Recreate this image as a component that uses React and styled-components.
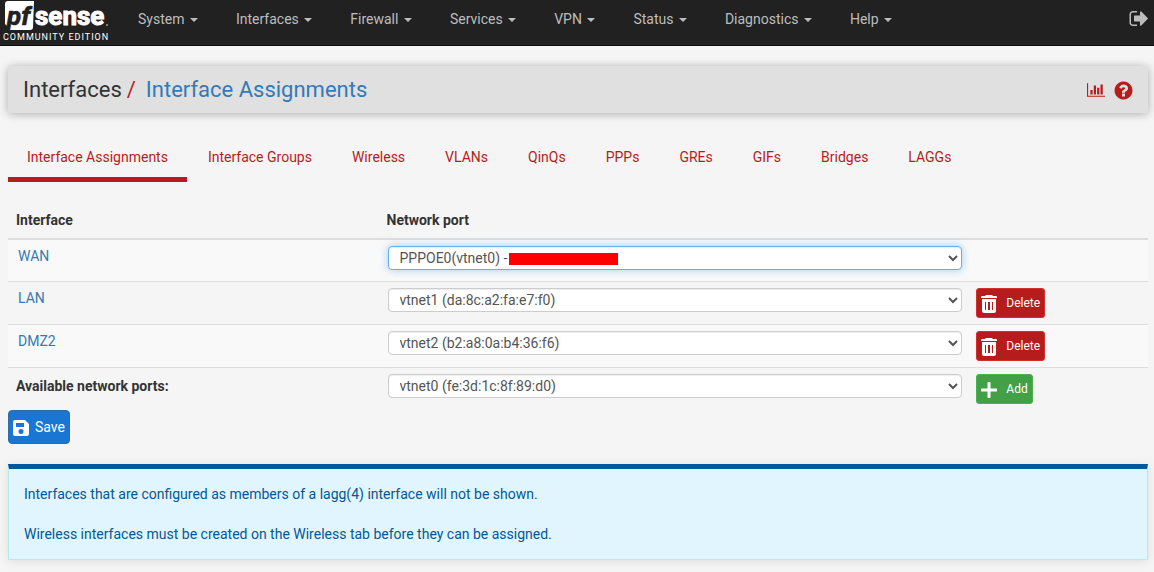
import React from "react";
import styled, { createGlobalStyle } from "styled-components";

const GlobalStyle = createGlobalStyle`
  *, *::before, *::after { box-sizing: border-box; }
  body {
    margin: 0;
    background: #f5f5f5;
    color: #333;
    font: 14px/20px Roboto, "Liberation Sans", sans-serif;
  }
  a { color: #337ab7; text-decoration: none; }
`;

const Navbar = styled.nav`
  display: flex;
  align-items: flex-start;
  height: 46px;
  background: #212121;
  border-bottom: 1px solid #080808;
`;

const Brand = styled.a`
  width: 123px;
  flex: none;
  svg { display: block; }
`;

const Menu = styled.ul`
  display: flex;
  flex: 1;
  margin: 0;
  padding: 0;
  list-style: none;
`;

const MenuLink = styled.a`
  display: block;
  padding: 9px 23px 10px 15px;
  color: #bdbdbd;
  white-space: nowrap;
`;

const Caret = styled.span`
  display: inline-block;
  margin-left: 2px;
  vertical-align: middle;
  border: 4px solid transparent;
  border-top-color: currentColor;
  border-bottom: 0;
`;

const Logout = styled.a`
  padding: 8px 3px 0 0;
  color: #bdbdbd;
  svg { display: block; }
`;

const Page = styled.main`
  padding: 20px 6px 12px 8px;
`;

const Header = styled.header`
  display: flex;
  align-items: center;
  justify-content: space-between;
  min-height: 47px;
  padding: 0 14px 0 15px;
  background: #e0e0e0;
  border-radius: 2px;
  box-shadow: 0 1px 10px rgba(0, 0, 0, 0.3);
`;

const Breadcrumb = styled.h1`
  display: flex;
  gap: 5px;
  margin: 0;
  font-size: 22px;
  line-height: 24px;
  font-weight: 400;
  a { margin-left: 5px; }
`;

const Slash = styled.span`
  color: #b71c1c;
`;

const HeaderIcons = styled.div`
  display: flex;
  align-items: center;
  gap: 8px;
  padding-top: 1px;
  a { color: #b71c1c; }
  svg { display: block; }
`;

const Tabs = styled.ul`
  display: flex;
  gap: 2px;
  margin: 24px 0 18px;
  padding: 0;
  list-style: none;
`;

const Tab = styled.a`
  display: block;
  padding: 10px 19px;
  color: #b71c1c;
  white-space: nowrap;
  border-bottom: 5px solid ${(p) => (p.$active ? "#b71c1c" : "transparent")};
`;

const Table = styled.table`
  width: 100%;
  border-collapse: collapse;
  table-layout: fixed;
  th, td { text-align: left; vertical-align: top; }
  th { padding: 10px 8px 8px; font-weight: 700; }
`;

const Column = styled.col`
  width: ${(p) => p.$width};
`;

const HeadRow = styled.tr`
  border-bottom: 2px solid #ddd;
`;

const Row = styled.tr`
  background: ${(p) => (p.$shaded ? "#f9f9f9" : "transparent")};
  &:not(:last-child) { border-bottom: 1px solid #ddd; }
  td { height: 42px; padding: 6px 10px; }
  th { padding: 8px 8px 0; }
`;

const PortCell = styled.td`
  && { padding: 6px 9px; }
`;

const ActionCell = styled.td`
  && { padding-left: 5px; }
`;

const PortPicker = styled.div`
  position: relative;
`;

const Select = styled.select`
  display: block;
  width: 100%;
  height: 24px;
  padding: 0 6px 0 7px;
  color: #555;
  font: inherit;
  background: #fff;
  border: 1px solid ${(p) => (p.$focused ? "#66afe9" : "#ccc")};
  border-radius: 4px;
  box-shadow: ${(p) =>
    p.$focused
      ? "inset 0 1px 1px rgba(0,0,0,.075), 0 0 8px rgba(102,175,233,.6)"
      : "inset 0 1px 1px rgba(0,0,0,.075)"};
`;

const Redaction = styled.span`
  position: absolute;
  left: 121px;
  top: 7px;
  width: 109px;
  height: 12px;
  background: #f00;
`;

const Button = styled.button`
  display: flex;
  align-items: center;
  gap: ${(p) => (p.$large ? "6px" : "9px")};
  height: ${(p) => (p.$large ? "34px" : "30px")};
  padding: 0 4px;
  color: #fff;
  font: ${(p) => (p.$large ? "14px/20px" : "12px/18px")} Roboto, sans-serif;
  background: ${(p) => p.$color};
  border: 1px solid ${(p) => p.$edge};
  border-radius: ${(p) => (p.$large ? "4px" : "3px")};
  svg { display: block; margin-top: 3px; }
`;

const Notice = styled.section`
  margin-top: 20px;
  padding: 15px;
  color: #01579b;
  background: #e1f5fe;
  border: 1px solid #b2ebf2;
  border-top: 5px solid #01579b;
  box-shadow: 0 1px 10px rgba(0, 0, 0, 0.1);
  p { margin: 0; }
  p + p { margin-top: 20px; }
`;

const Logo = () => (
  <svg width="112" height="44" viewBox="0 0 112 44" role="img" aria-label="pfSense Community Edition">
    <path d="M8 1h26l-1 26q0 3-3 3H8l-1-4-2-2V4q0-3 3-3z" fill="#fff" />
    <text x="7" y="25" fontFamily="Roboto" fontSize="26" fontWeight="700" fontStyle="italic" fill="#212121" stroke="#212121" strokeWidth="0.6">pf</text>
    <text x="35" y="25" fontFamily="Roboto" fontSize="26" fontWeight="700" fill="#fff" stroke="#fff" strokeWidth="1">sense</text>
    <circle cx="107" cy="25" r="1" fill="#999" />
    <text x="3" y="40" fontFamily="Roboto" fontSize="9" letterSpacing="1" fill="#fff">COMMUNITY EDITION</text>
  </svg>
);

const LogoutIcon = () => (
  <svg width="22" height="21" viewBox="0 0 1792 1792" fill="currentColor" aria-hidden="true">
    <path d="M640 1440q0 4 1 20t.5 26.5-3 23.5-10 19.5-20.5 6.5h-320q-119 0-203.5-84.5t-84.5-203.5v-704q0-119 84.5-203.5t203.5-84.5h320q13 0 22.5 9.5t9.5 22.5q0 4 1 20t.5 26.5-3 23.5-10 19.5-20.5 6.5h-320q-66 0-113 47t-47 113v704q0 66 47 113t113 47h312l11.5 1 11.5 3 8 5.5 7 9 2 13.5zm928-544q0 26-19 45l-544 544q-19 19-45 19t-45-19-19-45v-288h-448q-26 0-45-19t-19-45v-384q0-26 19-45t45-19h448v-288q0-26 19-45t45-19 45 19l544 544q19 19 19 45z" />
  </svg>
);

const ChartIcon = () => (
  <svg width="18" height="16" viewBox="0 0 2048 1792" fill="currentColor" aria-hidden="true">
    <path d="M640 896v512h-256v-512h256zm384-512v1024h-256v-1024h256zm1024 1152v128h-2048v-1536h128v1408h1920zm-640-896v768h-256v-768h256zm384-384v1152h-256v-1152h256z" />
  </svg>
);

const HelpIcon = () => (
  <svg width="21" height="21" viewBox="0 0 1792 1792" fill="currentColor" aria-hidden="true">
    <path d="M1024 1376v-192q0-14-9-23t-23-9h-192q-14 0-23 9t-9 23v192q0 14 9 23t23 9h192q14 0 23-9t9-23zm256-672q0-88-55.5-163t-138.5-116-170-41q-243 0-371 213-15 24 8 42l132 100q7 6 19 6 16 0 25-12 53-68 86-92 34-24 86-24 48 0 85.5 26t37.5 59q0 38-20 61t-68 45q-63 28-115.5 86.5t-52.5 125.5v36q0 14 9 23t23 9h192q14 0 23-9t9-23q0-19 21.5-49.5t54.5-49.5q32-18 49-28.5t46-35 44.5-48 28-60.5 12.5-81zm384 192q0 209-103 385.5t-279.5 279.5-385.5 103-385.5-103-279.5-279.5-103-385.5 103-385.5 279.5-279.5 385.5-103 385.5 103 279.5 279.5 103 385.5z" />
  </svg>
);

const TrashIcon = () => (
  <svg width="16" height="18" viewBox="0 0 16 18" fill="#fff" aria-hidden="true">
    <path fillRule="evenodd" d="M5 0h6l1 1h3q1 0 1 1v1H0V2q0-1 1-1h3zM1 4h14v12q0 2-2 2H3q-2 0-2-2zM4 7v8h1V7zM7 7v8h2V7zM11 7v8h1V7z" />
  </svg>
);

const SaveIcon = () => (
  <svg width="16" height="16" viewBox="0 0 16 16" fill="#fff" aria-hidden="true">
    <path fillRule="evenodd" d="M2 0h10l4 4v10q0 2-2 2H2q-2 0-2-2V2q0-2 2-2zM3 3v4h8V3zM8 9a2 2 0 1 0 0 5 2 2 0 1 0 0-5z" />
  </svg>
);

const PlusIcon = () => (
  <svg width="16" height="16" viewBox="0 0 16 16" aria-hidden="true">
    <path d="M8 1v14M1 8h14" stroke="#fff" strokeWidth="3" strokeLinecap="round" />
  </svg>
);

const menus = ["System", "Interfaces", "Firewall", "Services", "VPN", "Status", "Diagnostics", "Help"];
const tabs = ["Interface Assignments", "Interface Groups", "Wireless", "VLANs", "QinQs", "PPPs", "GREs", "GIFs", "Bridges", "LAGGs"];
const interfaces = [
  { name: "WAN", port: "PPPOE0(vtnet0) -", focused: true },
  { name: "LAN", port: "vtnet1 (da:8c:a2:fa:e7:f0)" },
  { name: "DMZ2", port: "vtnet2 (b2:a8:0a:b4:36:f6)" },
];

export default function App() {
  return (
    <>
      <GlobalStyle />
      <Navbar>
        <Brand href="#"><Logo /></Brand>
        <Menu>
          {menus.map((m) => <li key={m}><MenuLink href="#">{m} <Caret /></MenuLink></li>)}
        </Menu>
        <Logout href="#" aria-label="Logout"><LogoutIcon /></Logout>
      </Navbar>
      <Page>
        <Header>
          <Breadcrumb>
            Interfaces <Slash>/</Slash> <a href="#">Interface Assignments</a>
          </Breadcrumb>
          <HeaderIcons>
            <a href="#" aria-label="Status"><ChartIcon /></a>
            <a href="#" aria-label="Help"><HelpIcon /></a>
          </HeaderIcons>
        </Header>
        <Tabs>
          {tabs.map((t, i) => <li key={t}><Tab href="#" $active={i === 0}>{t}</Tab></li>)}
        </Tabs>
        <Table>
          <colgroup>
            <Column $width="32.5%" />
            <Column $width="52%" />
            <Column $width="15.5%" />
          </colgroup>
          <thead>
            <HeadRow><th>Interface</th><th>Network port</th><th /></HeadRow>
          </thead>
          <tbody>
            {interfaces.map((it, i) => (
              <Row key={it.name} $shaded={i % 2 === 0}>
                <td><a href="#">{it.name}</a></td>
                <PortCell>
                  <PortPicker>
                    <Select $focused={it.focused} aria-label={`${it.name} network port`}>
                      <option>{it.port}</option>
                    </Select>
                    {it.focused && <Redaction />}
                  </PortPicker>
                </PortCell>
                <ActionCell>
                  {!it.focused && <Button $color="#b71c1c" $edge="#d32f2f"><TrashIcon />Delete</Button>}
                </ActionCell>
              </Row>
            ))}
            <Row>
              <th><label htmlFor="available">Available network ports:</label></th>
              <PortCell>
                <Select id="available"><option>vtnet0 (fe:3d:1c:8f:89:d0)</option></Select>
              </PortCell>
              <ActionCell>
                <Button $color="#43a047" $edge="#4caf50"><PlusIcon />Add</Button>
              </ActionCell>
            </Row>
          </tbody>
        </Table>
        <Button $large $color="#1976d2" $edge="#2e6da4"><SaveIcon />Save</Button>
        <Notice>
          <p>Interfaces that are configured as members of a lagg(4) interface will not be shown.</p>
          <p>Wireless interfaces must be created on the Wireless tab before they can be assigned.</p>
        </Notice>
      </Page>
    </>
  );
}
